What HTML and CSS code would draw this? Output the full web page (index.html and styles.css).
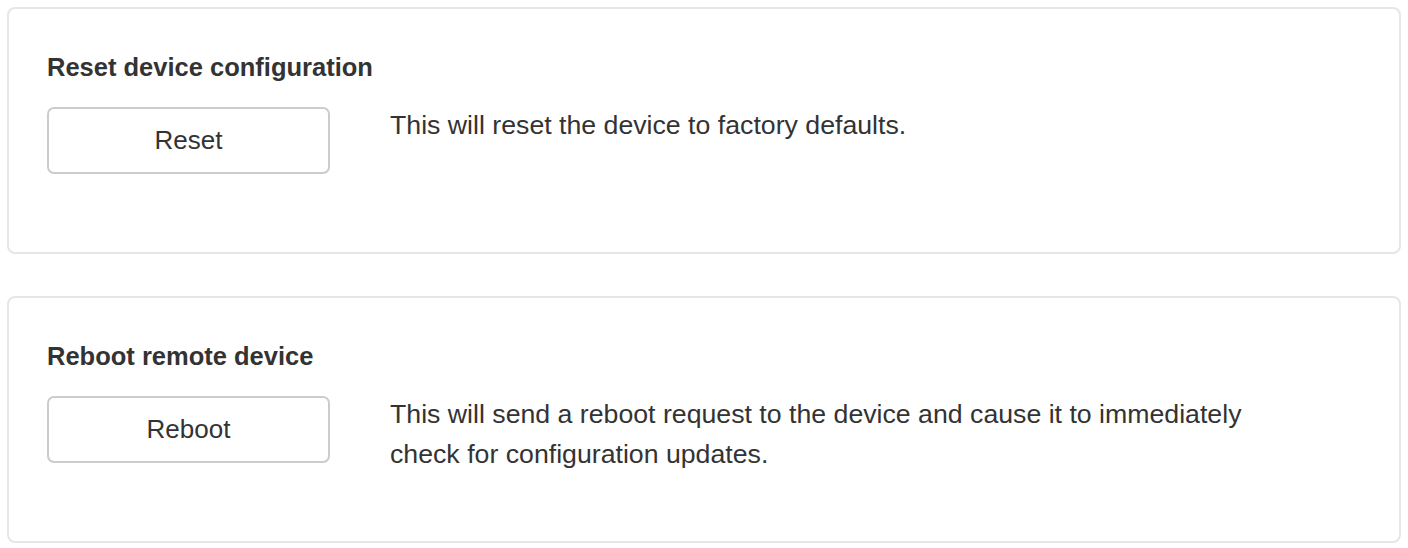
FILE: index.html
```html
<!DOCTYPE html>
<html>
<head>
<meta charset="utf-8">
<link rel="stylesheet" href="styles.css">
</head>
<body>
  <section class="card">
    <h2 class="card-title">Reset device configuration</h2>
    <div class="row">
      <div class="action"><button class="btn">Reset</button></div>
      <p class="desc">This will reset the device to factory defaults.</p>
    </div>
  </section>
  <section class="card">
    <h2 class="card-title">Reboot remote device</h2>
    <div class="row">
      <div class="action"><button class="btn">Reboot</button></div>
      <p class="desc">This will send a reboot request to the device and cause it to immediately check for configuration updates.</p>
    </div>
  </section>
</body>
</html>
```

FILE: styles.css
```css
html, body {
  background: #ffffff;
}
body {
  margin: 7px;
  font-family: "Liberation Sans", Arial, Helvetica, sans-serif;
  color: #333333;
}
.card {
  border: 2px solid #e6e6e6;
  border-radius: 8px;
  padding: 43px 38px 64px 38px;
  margin-bottom: 42px;
}
.card:last-child {
  margin-bottom: 0;
}
.card-title {
  margin: 0;
  font-size: 25.5px;
  line-height: 30px;
  font-weight: bold;
  color: #333333;
}
.row {
  display: flex;
  align-items: flex-start;
  margin-top: 25px;
}
.action {
  width: 283px;
  flex: none;
  padding-bottom: 14px;
}
.btn {
  display: block;
  width: 283px;
  height: 67px;
  box-sizing: border-box;
  border: 2px solid #cccccc;
  border-radius: 7px;
  background: #ffffff;
  font-family: "Liberation Sans", Arial, Helvetica, sans-serif;
  font-size: 26px;
  color: #333333;
  padding: 0;
}
.desc {
  margin: -2px 0 0 60px;
  max-width: 900px;
  font-size: 26.7px;
  line-height: 40px;
  color: #333333;
}
```
